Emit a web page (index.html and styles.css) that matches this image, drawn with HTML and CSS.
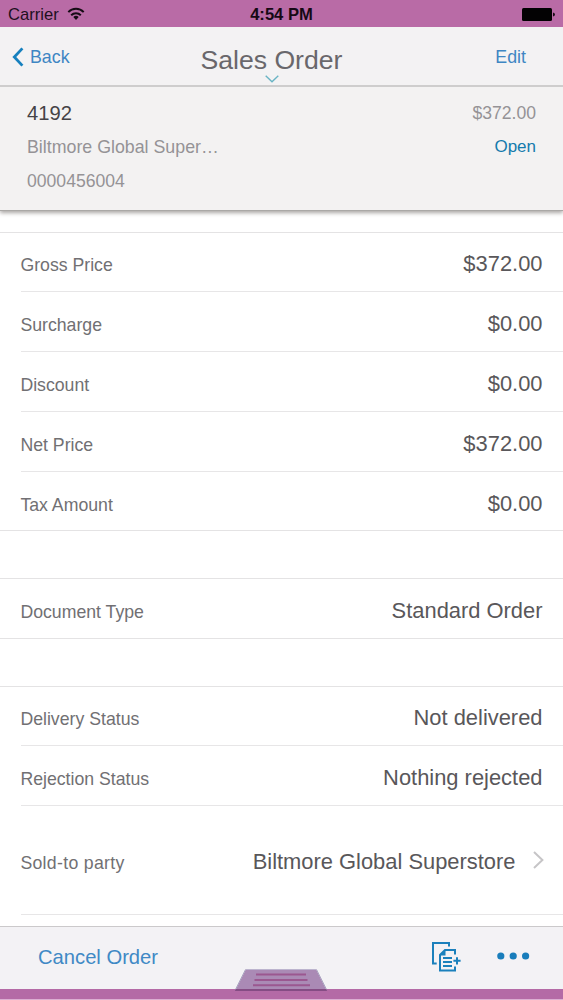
FILE: index.html
```html
<!DOCTYPE html>
<html lang="en">
<head>
<meta charset="utf-8">
<title>Sales Order</title>
<link rel="stylesheet" href="styles.css">
</head>
<body>
<div class="screen">
  <div class="status-bar">
    <div class="carrier"><span>Carrier</span>
      <svg class="wifi" width="18" height="14" viewBox="0 0 18 14" fill="none" stroke="#160c15" stroke-width="2"><path d="M1.3 5.1a10.8 10.8 0 0 1 15.4 0M4.2 8.2a6.8 6.8 0 0 1 9.6 0"/><path d="M6.3 10.1a3.8 3.8 0 0 1 5.4 0L9 12.9z" fill="#160c15" stroke="none"/></svg>
    </div>
    <strong class="time">4:54 PM</strong>
    <svg class="battery" width="33" height="13" viewBox="0 0 33 13"><rect width="30" height="13" rx="1.5" fill="#030203"/><path d="M31 4.5q2 .5 2 2t-2 2z" fill="#180c16"/></svg>
  </div>
  <header class="nav">
    <a class="back"><svg width="12" height="20" viewBox="0 0 12 20" fill="none" stroke="#1680be" stroke-width="2.8"><path d="M10.4 1.4 2.3 10l8.1 8.6"/></svg><span>Back</span></a>
    <h1 class="title">Sales Order<svg class="title-arrow" width="14" height="8" viewBox="0 0 14 8" fill="none" stroke="#69b4c4" stroke-width="1.4"><path d="m.7.8 6.3 6 6.3-6"/></svg></h1>
    <a class="edit">Edit</a>
  </header>
  <section class="summary">
    <div class="summary-row"><span class="order-id">4192</span><span>$372.00</span></div>
    <div class="summary-row"><span class="customer">Biltmore Global Super…</span><span class="open">Open</span></div>
    <div class="summary-row"><span>0000456004</span></div>
  </section>
  <main class="content">
    <div class="group prices">
      <div class="row"><span>Gross Price</span><span class="value">$372.00</span></div>
      <div class="row"><span>Surcharge</span><span class="value">$0.00</span></div>
      <div class="row"><span>Discount</span><span class="value">$0.00</span></div>
      <div class="row"><span>Net Price</span><span class="value">$372.00</span></div>
      <div class="row"><span>Tax Amount</span><span class="value">$0.00</span></div>
    </div>
    <div class="group document">
      <div class="row"><span>Document Type</span><span class="value">Standard Order</span></div>
    </div>
    <div class="group statuses">
      <div class="row"><span>Delivery Status</span><span class="value">Not delivered</span></div>
      <div class="row"><span>Rejection Status</span><span class="value">Nothing rejected</span></div>
      <div class="row party"><span class="party-label">Sold-to party</span><span class="value">Biltmore Global Superstore</span><svg class="chevron" width="11" height="18" viewBox="0 0 11 18" fill="none" stroke="#c6c5c7" stroke-width="2"><path d="m1 1 8.4 8L1 17"/></svg></div>
    </div>
  </main>
  <footer class="toolbar">
    <a class="cancel">Cancel Order</a>
    <svg class="copy" width="30" height="30" viewBox="0 0 30 30" fill="none" stroke="#1b80bc" stroke-width="2"><path d="M17 4.6V1H1v20.5H4.7"/><path d="M23 12.6V8H13L8 13v15.5h15v-4"/><path d="M13.5 8v5.5H8z" fill="#1b80bc" stroke="none"/><path d="M11 16h9M11 20h9M11 24h9"/><path d="M25 15.2v7.2M21.4 18.8h7.2"/></svg>
    <svg class="more" width="33" height="8" viewBox="0 0 33 8" fill="#197dbb"><circle cx="3.8" cy="4" r="3.6"/><circle cx="16.2" cy="4" r="3.6"/><circle cx="28.6" cy="4" r="3.6"/></svg>
    <svg class="handle" width="94" height="22" viewBox="0 0 94 22"><path d="M12 0h70l11 22H1z" fill="#aa8ab5"/><path d="M12 .5h70" stroke="#bcb4ce"/><path d="m11.5.5-10 20M82.5.5l10 20" stroke="#aaa4c1"/><path d="M1.8 20h90.4l1 2H.8z" fill="#854c84"/><path d="M22 5.5h50M20.5 11h53M19 16.3h57" stroke="#9b5790" stroke-width="2"/></svg>
  </footer>
  <div class="bottom-strip"></div>
</div>
</body>
</html>
```
FILE: styles.css
```css
* { box-sizing: border-box; }
body { margin: 0; background: #fff; font-family: "Liberation Sans", Arial, sans-serif; }
.screen { width: 563px; height: 1000px; display: flex; flex-direction: column; overflow: hidden; background: #fff; }
.status-bar { height: 27px; flex: none; display: grid; grid-template-columns: 1fr auto 1fr; align-items: center; padding: 2px 8px 0; background: #b96ba6; color: #21101e; }
.carrier { display: flex; align-items: center; gap: 8px; font-size: 16.6px; }
.wifi { margin-bottom: 2px; }
.time { font-size: 16.6px; color: #160915; }
.battery { justify-self: end; margin-bottom: 1px; }
.nav { height: 60px; flex: none; display: grid; grid-template-columns: 1fr 143px 1fr; align-items: center; padding: 0 37px 0 12px; background: #f3f2f3; border-bottom: 2px solid #cecdcd; color: #3e86c3; font-size: 17.8px; }
.back { display: flex; align-items: center; gap: 6px; padding-top: 2px; }
.title { position: relative; margin: 7px 0 0 3px; font-size: 26.6px; line-height: 30px; font-weight: 400; color: #69676b; white-space: nowrap; }
.title-arrow { position: absolute; left: 64px; bottom: -8px; }
.edit { justify-self: end; padding-top: 2px; }
.summary { position: relative; height: 124px; flex: none; padding: 9px 27px 0; background: #f3f2f2; border-bottom: 1px solid #aaa8a6; box-shadow: 0 2px 4px #aaa6a4; clip-path: inset(0 0 -10px); color: #959396; font-size: 17.6px; }
.summary-row { height: 34px; display: flex; align-items: center; justify-content: space-between; }
.order-id { font-size: 20.2px; color: #454346; }
.customer { font-size: 17.8px; }
.open { color: #147bad; font-size: 17px; }
.content { flex: 1; min-height: 0; padding-top: 21px; }
.group { border-top: 1px solid #e4e3e4; border-bottom: 1px solid #e4e3e4; margin-bottom: 47px; }
.row { height: 59.8px; display: flex; align-items: center; padding: 6px 20.5px 0 20.4px; position: relative; color: #717073; font-size: 17.7px; }
.row:not(:last-child)::after, .party::after { content: ""; position: absolute; left: 21px; right: 0; bottom: 0.6px; height: 1px; background: #e7e6e7; }
.value { margin-left: auto; padding-bottom: 3px; color: #59575a; font-size: 21.9px; line-height: 26px; }
.prices { height: 299px; }
.document { height: 61px; }
.document .row { padding-top: 8px; }
.statuses { height: 229px; margin-bottom: 0; border-bottom: 0; }
.row.party { height: 108.4px; padding-top: 5px; }
.row.party::after { bottom: 0; }
.party-label { letter-spacing: 0.3px; }
.chevron { margin: 0 -1px 7px 17px; }
.toolbar { position: relative; height: 63px; flex: none; display: flex; align-items: center; padding: 0 33px 3px 38px; border-top: 1px solid #cbc9cb; background: #f3f2f5; }
.cancel { color: #4089c5; font-size: 20.2px; padding-top: 1px; }
.copy { margin-left: auto; margin-right: 35px; }
.more { margin-bottom: 2px; }
.handle { position: absolute; left: 234px; bottom: -2px; }
.bottom-strip { height: 11px; flex: none; background: #b46aa6; border-bottom: 1px solid #dcaed2; }
```
